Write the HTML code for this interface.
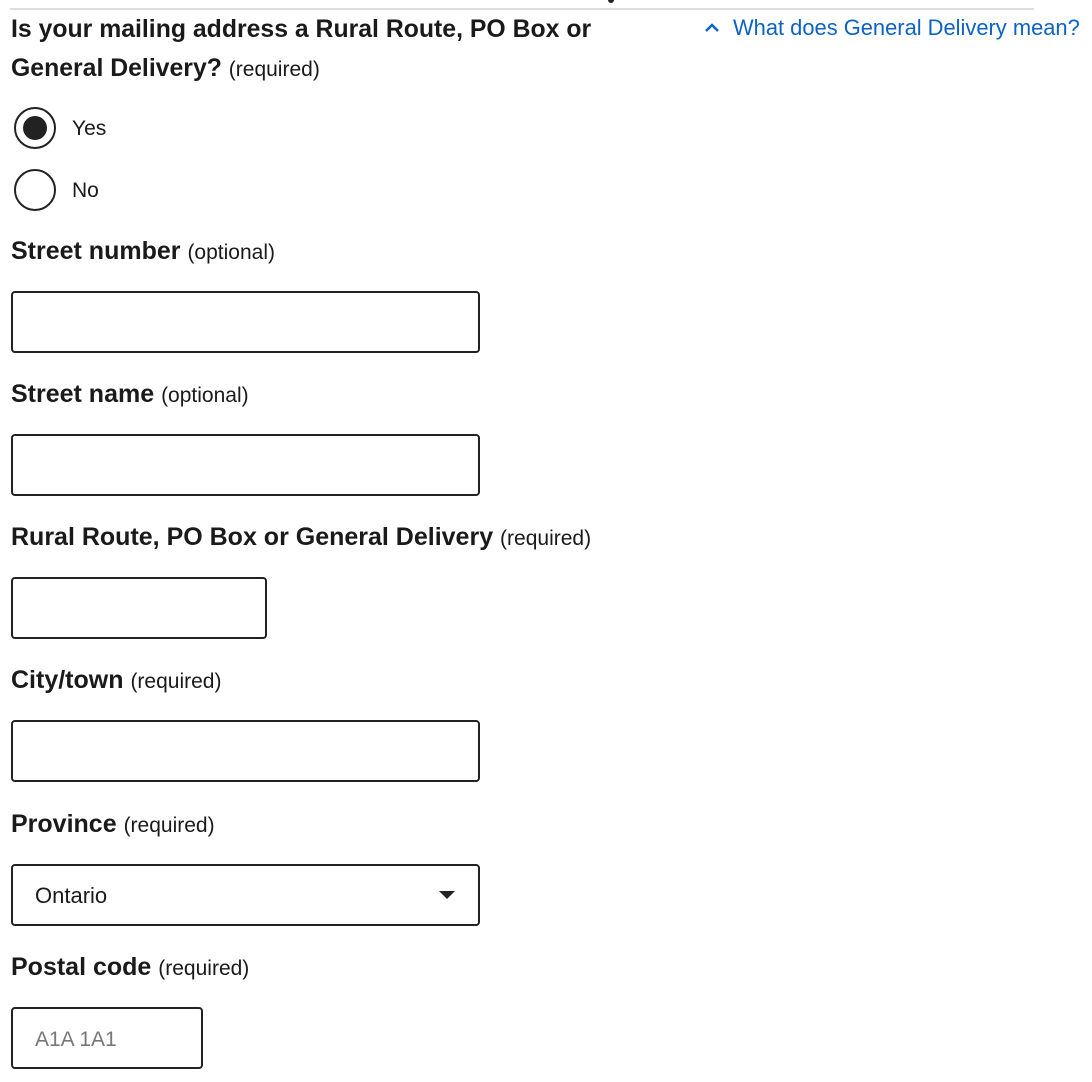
<!DOCTYPE html>
<html><head><style>
body{margin:0;width:1092px;height:1082px;background:#fff;position:relative;overflow:hidden;font-family:"Liberation Sans",sans-serif;color:#1a1a1a}
.a{position:absolute;white-space:nowrap}
.h{font-weight:bold;font-size:24.8px;line-height:30px}
.l{font-weight:bold;font-size:25px;line-height:30px}
.l span,.h span{font-weight:normal;font-size:21px}
.in{position:absolute;left:11px;height:58px;border:2px solid #222;border-radius:4px;box-sizing:content-box}
.r{position:absolute;left:14px;width:38px;height:38px;border:2px solid #222;border-radius:50%}
.t{font-size:21px;line-height:24px}
</style></head><body>
<div class="a" style="left:10px;top:8px;width:1024px;height:2px;background:#ddd"></div>
<div class="a" style="left:608px;top:0;width:6px;height:3px;background:#222;border-radius:0 0 3px 3px"></div>
<div class="a h" style="left:11px;top:15px">Is your mailing address a Rural Route, PO Box or</div>
<div class="a h" style="left:11px;top:54px">General Delivery? <span>(required)</span></div>
<svg class="a" style="left:703px;top:21px" width="18" height="14" viewBox="0 0 18 14"><path d="M3 10 L9 4 L15 10" fill="none" stroke="#0b63c5" stroke-width="2.5"/></svg>
<div class="a" style="left:733px;top:16px;color:#0b63c5;font-size:21.9px;line-height:24px">What does General Delivery mean?</div>
<div class="r" style="top:107px"><div style="position:absolute;left:7px;top:7px;width:24px;height:24px;border-radius:50%;background:#222"></div></div>
<div class="a t" style="left:72px;top:117px">Yes</div>
<div class="r" style="top:169px"></div>
<div class="a t" style="left:72px;top:179px">No</div>
<div class="a l" style="left:11px;top:236px">Street number <span>(optional)</span></div>
<div class="in" style="top:291px;width:465px"></div>
<div class="a l" style="left:11px;top:379px">Street name <span>(optional)</span></div>
<div class="in" style="top:434px;width:465px"></div>
<div class="a l" style="left:11px;top:522px">Rural Route, PO Box or General Delivery <span>(required)</span></div>
<div class="in" style="top:577px;width:252px"></div>
<div class="a l" style="left:11px;top:665px">City/town <span>(required)</span></div>
<div class="in" style="top:720px;width:465px"></div>
<div class="a l" style="left:11px;top:809px">Province <span>(required)</span></div>
<div class="in" style="top:864px;width:465px"></div>
<div class="a" style="left:35px;top:884px;font-size:22px;line-height:24px">Ontario</div>
<svg class="a" style="left:438px;top:890px" width="18" height="10"><path d="M1 1 L17 1 L9 9 Z" fill="#222"/></svg>
<div class="a l" style="left:11px;top:952px">Postal code <span>(required)</span></div>
<div class="in" style="top:1007px;width:188px"></div>
<div class="a" style="left:35px;top:1028px;color:#777;font-size:21px;line-height:24px">A1A 1A1</div>
</body></html>
